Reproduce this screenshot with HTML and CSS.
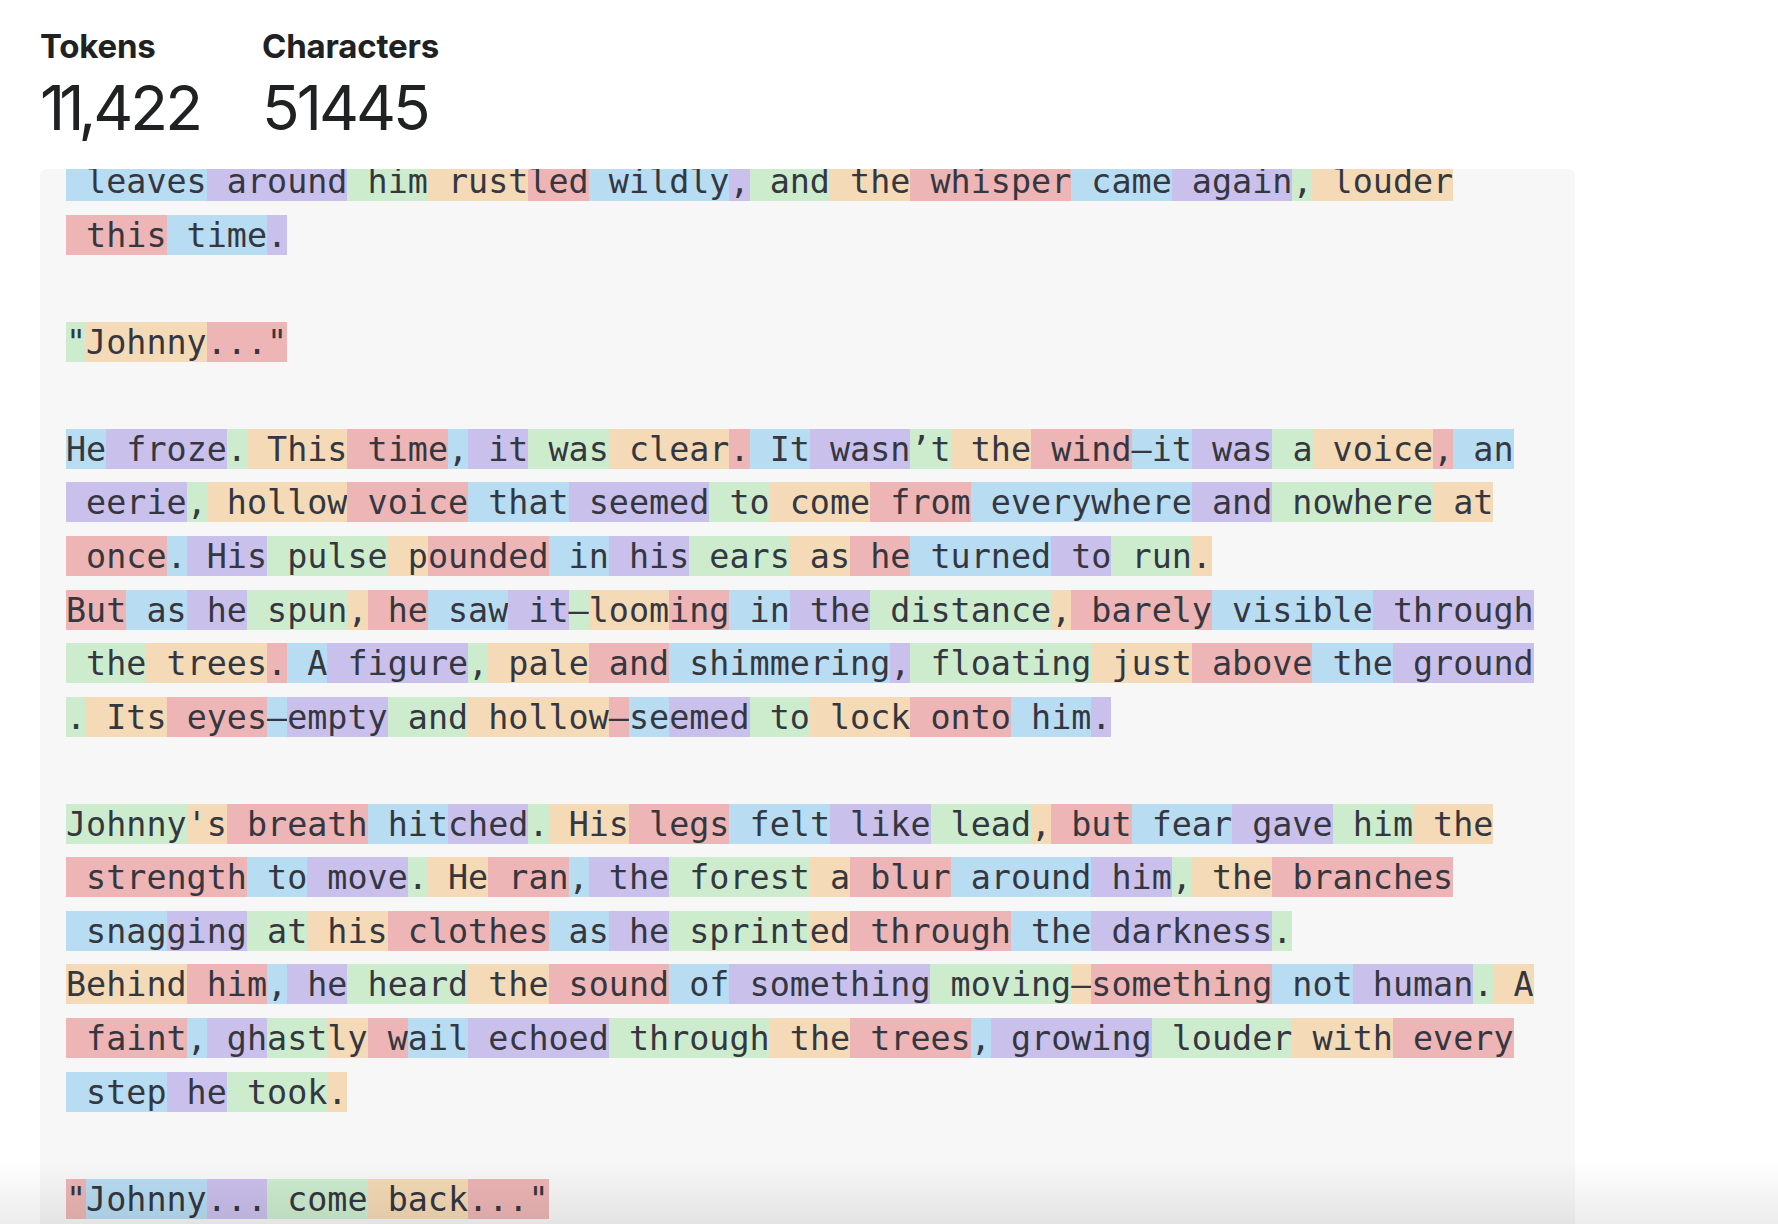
FILE: index.html
```html
<!DOCTYPE html>
<html lang="en">
<head>
<meta charset="utf-8">
<title>Tokenizer</title>
<link rel="stylesheet" href="styles.css">
</head>
<body>
<main class="page">
  <section class="stats">
    <div class="stat">
      <div class="stat-label">Tokens</div>
      <div class="stat-value"><span class="tight">11</span>,422</div>
    </div>
    <div class="stat">
      <div class="stat-label">Characters</div>
      <div class="stat-value">51445</div>
    </div>
  </section>
  <section class="panel">
    <div class="tokens"><span class="b"> leaves</span><span class="p"> around</span><span class="g"> him</span><span class="o"> rust</span><span class="r">led</span><span class="b"> wildly</span><span class="p">,</span><span class="g"> and</span><span class="o"> the</span><span class="r"> whisper</span><span class="b"> came</span><span class="p"> again</span><span class="g">,</span><span class="o"> louder</span>
<span class="r"> this</span><span class="b"> time</span><span class="p">.</span>

<span class="g">"</span><span class="o">Johnny</span><span class="r">..."</span>

<span class="b">He</span><span class="p"> froze</span><span class="g">.</span><span class="o"> This</span><span class="r"> time</span><span class="b">,</span><span class="p"> it</span><span class="g"> was</span><span class="o"> clear</span><span class="r">.</span><span class="b"> It</span><span class="p"> wasn</span><span class="g">’t</span><span class="o"> the</span><span class="r"> wind</span><span class="b">—it</span><span class="p"> was</span><span class="g"> a</span><span class="o"> voice</span><span class="r">,</span><span class="b"> an</span>
<span class="p"> eerie</span><span class="g">,</span><span class="o"> hollow</span><span class="r"> voice</span><span class="b"> that</span><span class="p"> seemed</span><span class="g"> to</span><span class="o"> come</span><span class="r"> from</span><span class="b"> everywhere</span><span class="p"> and</span><span class="g"> nowhere</span><span class="o"> at</span>
<span class="r"> once</span><span class="b">.</span><span class="p"> His</span><span class="g"> pulse</span><span class="o"> p</span><span class="r">ounded</span><span class="b"> in</span><span class="p"> his</span><span class="g"> ears</span><span class="o"> as</span><span class="r"> he</span><span class="b"> turned</span><span class="p"> to</span><span class="g"> run</span><span class="o">.</span>
<span class="r">But</span><span class="b"> as</span><span class="p"> he</span><span class="g"> spun</span><span class="o">,</span><span class="r"> he</span><span class="b"> saw</span><span class="p"> it</span><span class="g">—</span><span class="o">loom</span><span class="r">ing</span><span class="b"> in</span><span class="p"> the</span><span class="g"> distance</span><span class="o">,</span><span class="r"> barely</span><span class="b"> visible</span><span class="p"> through</span>
<span class="g"> the</span><span class="o"> trees</span><span class="r">.</span><span class="b"> A</span><span class="p"> figure</span><span class="g">,</span><span class="o"> pale</span><span class="r"> and</span><span class="b"> shimmering</span><span class="p">,</span><span class="g"> floating</span><span class="o"> just</span><span class="r"> above</span><span class="b"> the</span><span class="p"> ground</span>
<span class="g">.</span><span class="o"> Its</span><span class="r"> eyes</span><span class="b">—</span><span class="p">empty</span><span class="g"> and</span><span class="o"> hollow</span><span class="r">—</span><span class="b">se</span><span class="p">emed</span><span class="g"> to</span><span class="o"> lock</span><span class="r"> onto</span><span class="b"> him</span><span class="p">.</span>

<span class="g">Johnny</span><span class="o">'s</span><span class="r"> breath</span><span class="b"> hit</span><span class="p">ched</span><span class="g">.</span><span class="o"> His</span><span class="r"> legs</span><span class="b"> felt</span><span class="p"> like</span><span class="g"> lead</span><span class="o">,</span><span class="r"> but</span><span class="b"> fear</span><span class="p"> gave</span><span class="g"> him</span><span class="o"> the</span>
<span class="r"> strength</span><span class="b"> to</span><span class="p"> move</span><span class="g">.</span><span class="o"> He</span><span class="r"> ran</span><span class="b">,</span><span class="p"> the</span><span class="g"> forest</span><span class="o"> a</span><span class="r"> blur</span><span class="b"> around</span><span class="p"> him</span><span class="g">,</span><span class="o"> the</span><span class="r"> branches</span>
<span class="b"> snag</span><span class="p">ging</span><span class="g"> at</span><span class="o"> his</span><span class="r"> clothes</span><span class="b"> as</span><span class="p"> he</span><span class="g"> sprint</span><span class="o">ed</span><span class="r"> through</span><span class="b"> the</span><span class="p"> darkness</span><span class="g">.</span>
<span class="o">Behind</span><span class="r"> him</span><span class="b">,</span><span class="p"> he</span><span class="g"> heard</span><span class="o"> the</span><span class="r"> sound</span><span class="b"> of</span><span class="p"> something</span><span class="g"> moving</span><span class="o">—</span><span class="r">something</span><span class="b"> not</span><span class="p"> human</span><span class="g">.</span><span class="o"> A</span>
<span class="r"> faint</span><span class="b">,</span><span class="p"> gh</span><span class="g">ast</span><span class="o">ly</span><span class="r"> w</span><span class="b">ail</span><span class="p"> echoed</span><span class="g"> through</span><span class="o"> the</span><span class="r"> trees</span><span class="b">,</span><span class="p"> growing</span><span class="g"> louder</span><span class="o"> with</span><span class="r"> every</span>
<span class="b"> step</span><span class="p"> he</span><span class="g"> took</span><span class="o">.</span>

<span class="r">"</span><span class="b">Johnny</span><span class="p">...</span><span class="g"> come</span><span class="o"> back</span><span class="r">..."</span>
</div>
  </section>
</main>
<div class="fade"></div>
</body>
</html>
```

FILE: styles.css
```css
html, body {
  margin: 0;
  padding: 0;
  background: #ffffff;
  overflow: hidden;
  height: 100%;
}

body {
  font-family: "Inter", "Liberation Sans", sans-serif;
  color: #202123;
}

.page {
  padding: 0 40px;
  height: 100%;
  display: flex;
  flex-direction: column;
}

.stats {
  display: grid;
  grid-template-columns: 222px auto;
  padding-top: 26px;
  height: 169px;
  box-sizing: border-box;
  flex: none;
}

.stat-label {
  font-weight: 700;
  font-size: 33px;
  line-height: 40px;
  letter-spacing: -0.2px;
}

.stat-value {
  font-weight: 400;
  font-size: 62px;
  line-height: 72px;
  letter-spacing: -3px;
  margin-top: 6px;
}

.tight {
  letter-spacing: -6px;
}

.panel {
  width: 1535px;
  flex: 1;
  background: #f7f7f7;
  border-radius: 7px 7px 0 0;
  overflow: hidden;
  box-sizing: border-box;
  padding: 0 26px;
}

.tokens {
  margin-top: -14px;
  white-space: pre;
  font-family: "DejaVu Sans Mono", "Liberation Mono", monospace;
  font-size: 33.4px;
  line-height: 53.57px;
  color: #353740;
}

.tokens span {
  padding-top: 1px;
}

.p { background: #cac0ec; }
.g { background: #cdecce; }
.o { background: #f4dab6; }
.r { background: #edb5b5; }
.b { background: #b8dcf2; }

.fade {
  position: fixed;
  left: 0;
  right: 0;
  bottom: 0;
  height: 64px;
  background: linear-gradient(to bottom, rgba(0, 0, 0, 0), rgba(0, 0, 0, 0.075));
  pointer-events: none;
}
```
